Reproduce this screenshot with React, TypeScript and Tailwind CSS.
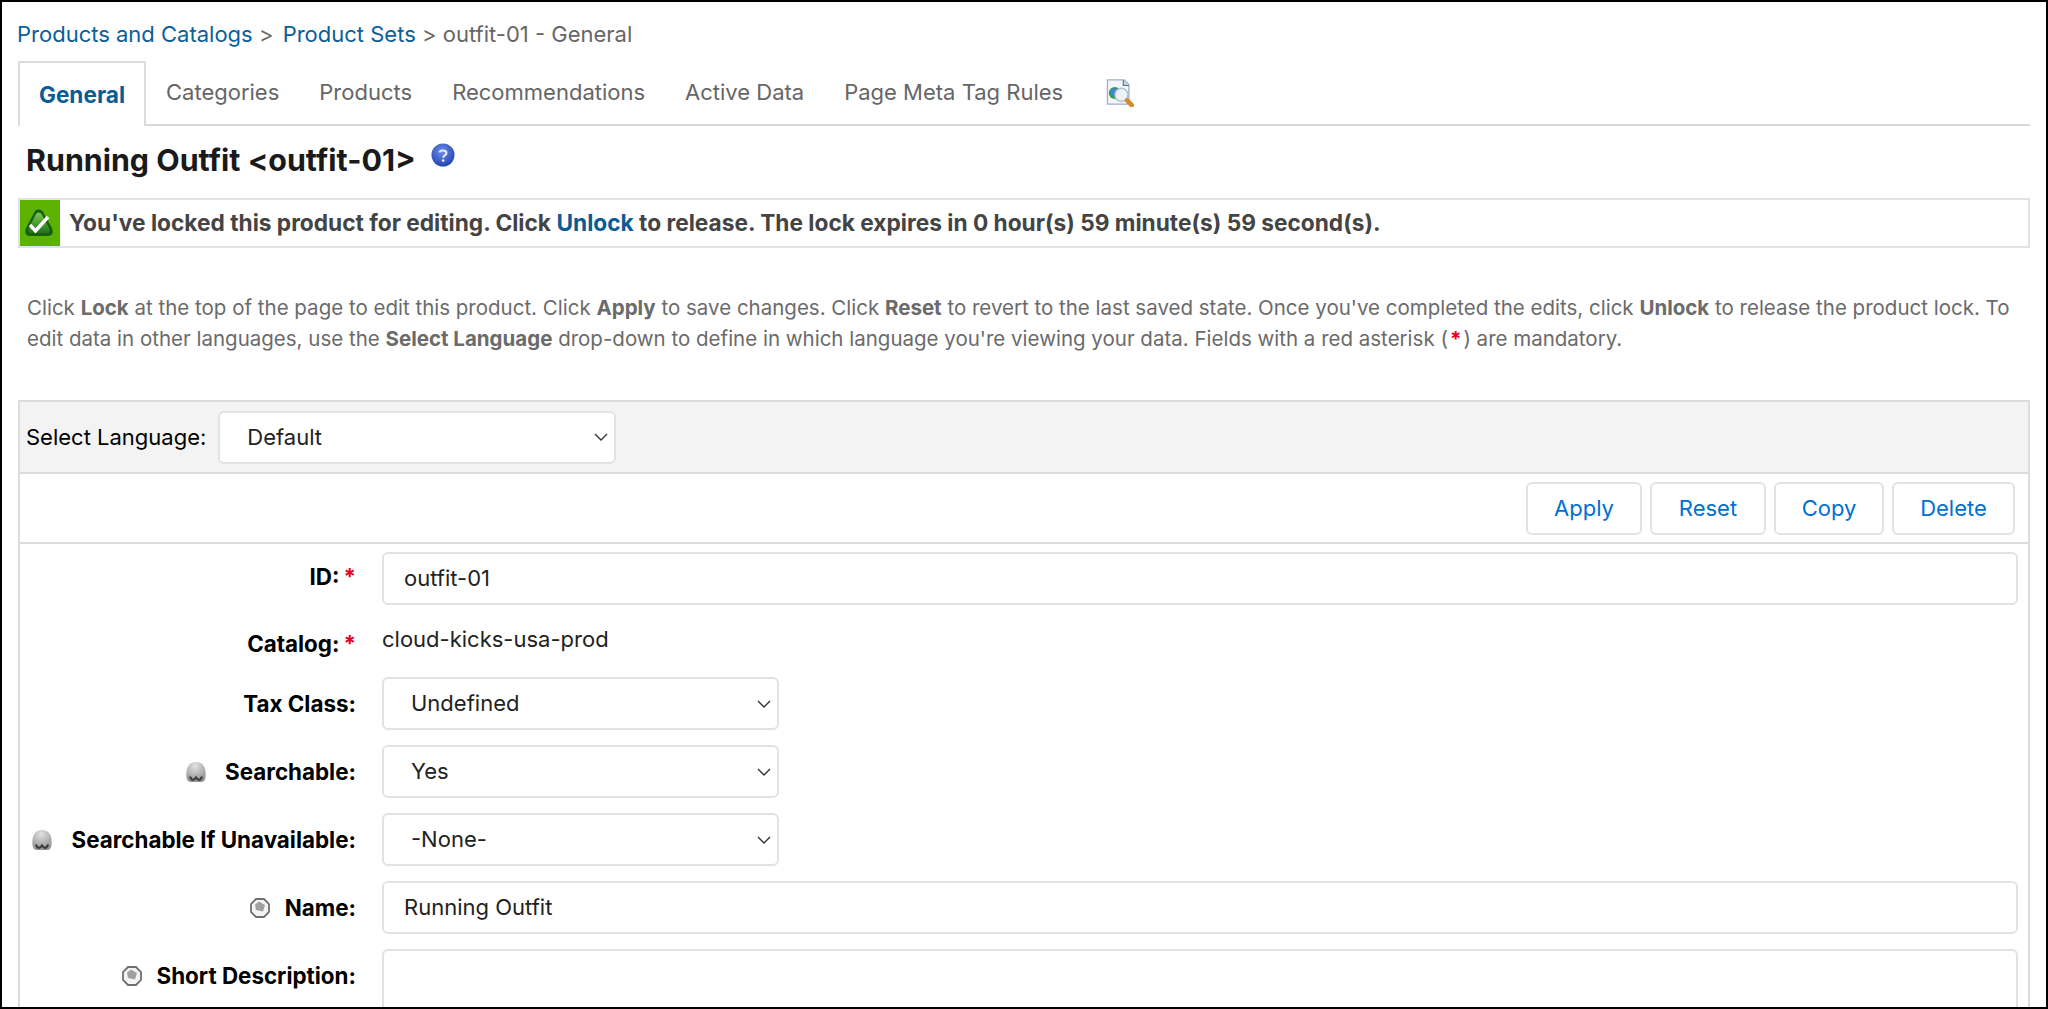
const LockedIcon = () => (
  <svg viewBox="0 0 40 46" className="w-10 h-[46px]">
    <defs>
      <linearGradient id="lockFill" x1="0" y1="0" x2="0" y2="1">
        <stop offset="0%" stopColor="#7cc756" />
        <stop offset="100%" stopColor="#1f7414" />
      </linearGradient>
    </defs>
    <rect width="40" height="46" fill="#5bb200" />
    <path d="M15 11 C17 9 21 9 23 12 L32 28 C34 33 32 36 28 36 L10 36 C6 36 4 33 6 28 Z" fill="#16600f" />
    <path d="M16 14 C18 12 20 12 22 15 L29 28 C30 31 29 33 27 33 L11 33 C9 33 8 31 9 28 Z" fill="url(#lockFill)" />
    <path d="M10 25 L15.5 31 L28 17" fill="none" stroke="#ffffff" strokeWidth="3.4" />
  </svg>
)

const HelpIcon = () => (
  <svg viewBox="0 0 24 24" className="w-6 h-6">
    <defs>
      <radialGradient id="helpFill" cx="45%" cy="35%" r="70%">
        <stop offset="0%" stopColor="#6f8fe8" />
        <stop offset="100%" stopColor="#1c3fae" />
      </radialGradient>
    </defs>
    <circle cx="12" cy="12" r="11.5" fill="url(#helpFill)" />
    <path d="M8.6 9.4 C8.8 6.9 15.4 6.6 15.4 10 C15.4 12.3 12.4 12.2 12.2 14.6" fill="none" stroke="#e4e9f7" strokeWidth="2.2" />
    <circle cx="12.2" cy="17.6" r="1.4" fill="#e4e9f7" />
  </svg>
)

const PreviewIcon = () => (
  <svg viewBox="0 2 30 30" className="w-[29px] h-[28px]">
    <path d="M1 3 H19 L24 8 V29 H1 Z" fill="#f2f5fa" stroke="#9fb0c8" strokeWidth="1.4" />
    <path d="M18 3 V9 H24" fill="#c8d2e0" stroke="#5f7088" strokeWidth="1.2" />
    <circle cx="9" cy="17" r="6.5" fill="#2f9a53" />
    <path d="M4 15 C7 11 10 12 12 14 C11 18 8 20 5 20 Z" fill="#3f86d6" />
    <circle cx="16" cy="19" r="7" fill="#eef2f7" stroke="#b4bdca" strokeWidth="1.6" />
    <path d="M22 25 L27 30" stroke="#d98a28" strokeWidth="5" strokeLinecap="round" />
  </svg>
)

const SiteIcon = () => (
  <svg viewBox="0 0 20 20" className="w-5 h-5">
    <defs>
      <radialGradient id="siteFill" cx="45%" cy="20%" r="85%">
        <stop offset="0%" stopColor="#e2e2e2" />
        <stop offset="100%" stopColor="#8c8c8c" />
      </radialGradient>
    </defs>
    <path d="M10 0 C16 0 19 4 19.5 10 C20 16 19 20 15 20 L5 20 C1 20 0 16 0.5 10 C1 4 4 0 10 0 Z" fill="url(#siteFill)" />
    <path d="M4 14.5 C5.5 19 8 18.5 10 15.5 C12 18.5 14.5 19 16 14.5" fill="none" stroke="#3a3a3a" strokeWidth="2.2" />
  </svg>
)

const LocaleIcon = () => (
  <svg viewBox="0 0 20 20" className="w-5 h-5">
    <path d="M6 1 H14 L19 6 V14 L14 19 H6 L1 14 V6 Z" fill="#f4f4f4" stroke="#707070" strokeWidth="1.8" />
    <path d="M9 3.5 L15 7 L13 13.5 L6 12 L5 6.5 Z" fill="#a0a0a0" />
  </svg>
)

const Chevron = () => (
  <svg viewBox="0 0 14 8" className="w-[14px] h-2" fill="none" stroke="#333333" strokeWidth="1.4">
    <path d="M1 1 L7 7 L13 1" />
  </svg>
)

const Required = () => <span className="text-[#e8001c] ml-[4px]">*</span>

type RowProps = {
  label: string
  icon?: React.ReactNode
  required?: boolean
  labelClass?: string
  rowClass: string
  children: React.ReactNode
}

const FormRow = ({ label, icon, required, labelClass, rowClass, children }: RowProps) => (
  <div className={`flex ${rowClass}`}>
    <div className={`w-[362px] shrink-0 pr-[26px] flex justify-end items-center font-bold text-black text-[22.4px] ${labelClass ?? ''}`}>
      {icon}
      <span className="whitespace-nowrap">
        {label}
        {required && <Required />}
      </span>
    </div>
    {children}
  </div>
)

const TextBox = ({ value, height = 'h-[53px]' }: { value?: string; height?: string }) => (
  <div className={`flex-1 ${height} border-2 border-[#e2e2e2] rounded-[6px] pl-[20px] flex items-center text-[#222222] bg-white`}>
    {value}
  </div>
)

const SelectBox = ({ value }: { value: string }) => (
  <div className="w-[397px] h-[53px] border-2 border-[#e2e2e2] rounded-[6px] pl-[27px] pr-[6px] flex items-center justify-between text-[#222222] bg-white">
    <span>{value}</span>
    <Chevron />
  </div>
)

const ActionButton = ({ label, width }: { label: string; width: string }) => (
  <button className={`${width} h-[53px] border-2 border-[#e2e2e2] rounded-[6px] bg-white text-[#0070d2]`}>
    {label}
  </button>
)

export default function App() {
  const tabs = ['Categories', 'Products', 'Recommendations', 'Active Data', 'Page Meta Tag Rules']

  return (
    <div className="w-[2048px] h-[1009px] overflow-hidden border-2 border-black bg-white px-4 font-['Inter',Arial,sans-serif] text-[22px]">
      {/* Breadcrumb */}
      <div className="h-[59px] pt-[18px] -ml-px leading-7 text-[#666666] whitespace-nowrap">
        <a className="text-[#0a6099]">Products and Catalogs</a> &gt;{'  '}
        <a className="text-[#0a6099] ml-[3px]">Product Sets</a> &gt; outfit-01 - General
      </div>

      {/* Tabs */}
      <div className="h-[65px] flex border-b-2 border-[#d8d8d8] text-[#666666]">
        <div className="h-[65px] w-[128px] border-2 border-b-0 border-[#dcdcdc] bg-white flex items-center justify-center font-bold text-[22.6px] text-[#0a5c94]">
          General
        </div>
        {tabs.map((tab) => (
          <div key={tab} className="h-[63px] px-[20px] flex items-center whitespace-nowrap">
            {tab}
          </div>
        ))}
        <div className="h-[63px] pl-[23px] flex items-center">
          <PreviewIcon />
        </div>
      </div>

      {/* Title */}
      <div className="h-[72px] pl-2 flex items-start">
        <h1 className="mt-[14px] text-[30.4px] leading-[40px] font-bold text-[#1a1a1a] whitespace-nowrap">Running Outfit &lt;outfit-01&gt;</h1>
        <div className="ml-[15px] mt-[17px]">
          <HelpIcon />
        </div>
      </div>

      {/* Lock message */}
      <div className="h-[50px] border-2 border-[#e2e2e2] flex items-center font-bold text-[#444444] text-[22.7px]">
        <LockedIcon />
        <span className="ml-[9px] whitespace-nowrap">
          You've locked this product for editing. Click <a className="text-[#0a5c94]">Unlock</a> to release. The lock expires in 0 hour(s) 59 minute(s) 59 second(s).
        </span>
      </div>

      {/* Help text */}
      <p className="mt-[44px] h-[108px] pl-[9px] text-[#6b6b6b] text-[20.5px] leading-[31px] whitespace-nowrap">
        Click <b>Lock</b> at the top of the page to edit this product. Click <b>Apply</b> to save changes. Click <b>Reset</b> to revert to the last saved state. Once you've completed the edits, click <b>Unlock</b> to release the product lock. To
        <br />
        edit data in other languages, use the <b>Select Language</b> drop-down to define in which language you're viewing your data. Fields with a red asterisk (<span className="text-[#e8001c] font-bold mx-[2px]">*</span>) are mandatory.
      </p>

      {/* Form panel */}
      <div className="border-2 border-[#dcdcdc]">
        <div className="h-[72px] bg-[#f3f3f3] border-b-2 border-[#dcdcdc] pl-[6px] flex items-center text-black">
          <span className="whitespace-nowrap">Select Language:</span>
          <div className="ml-[12px] w-[398px] h-[53px] border-2 border-[#e2e2e2] rounded-[6px] pl-[27px] pr-[6px] flex items-center justify-between text-[#222222] bg-white">
            <span>Default</span>
            <Chevron />
          </div>
        </div>

        <div className="h-[70px] border-b-2 border-[#dcdcdc] pr-[13px] flex items-center justify-end gap-2">
          <ActionButton label="Apply" width="w-[116px]" />
          <ActionButton label="Reset" width="w-[116px]" />
          <ActionButton label="Copy" width="w-[110px]" />
          <ActionButton label="Delete" width="w-[123px]" />
        </div>

        <div className="pt-2 pr-[10px]">
          <FormRow label="ID:" required rowClass="h-[53px]" labelClass="pb-[4px] pr-[3px]">
            <TextBox value="outfit-01" />
          </FormRow>
          <FormRow label="Catalog:" required rowClass="h-[72px] items-center" labelClass="pt-[6px] pr-[3px]">
            <span className="text-[#222222] -mt-[3px]">cloud-kicks-usa-prod</span>
          </FormRow>
          <div className="flex flex-col gap-[15px]">
            <FormRow label="Tax Class:" rowClass="h-[53px]">
              <SelectBox value="Undefined" />
            </FormRow>
            <FormRow label="Searchable:" icon={<span className="mr-[19px]"><SiteIcon /></span>} rowClass="h-[53px]">
              <SelectBox value="Yes" />
            </FormRow>
            <FormRow label="Searchable If Unavailable:" icon={<span className="mr-[19px]"><SiteIcon /></span>} rowClass="h-[53px]">
              <SelectBox value="-None-" />
            </FormRow>
            <FormRow label="Name:" icon={<span className="mr-[15px]"><LocaleIcon /></span>} rowClass="h-[53px]">
              <TextBox value="Running Outfit" />
            </FormRow>
            <FormRow label="Short Description:" icon={<span className="mr-[15px]"><LocaleIcon /></span>} rowClass="h-[120px] items-start" labelClass="h-[53px]">
              <TextBox height="h-[120px]" />
            </FormRow>
          </div>
        </div>
      </div>
    </div>
  )
}
